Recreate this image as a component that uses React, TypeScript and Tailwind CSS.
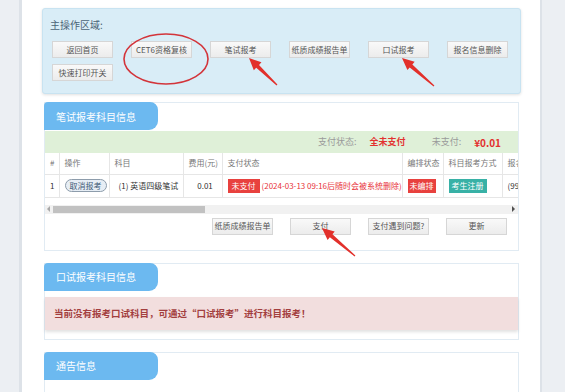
import type { ReactNode } from "react";

const topButtons = ["返回首页", "CET6资格复核", "笔试报考", "纸质成绩报告单", "口试报考", "报名信息删除", "快速打印开关"];
const payButtons = ["纸质成绩报告单", "支付", "支付遇到问题?", "更新"];

function Btn({ children }: { children: ReactNode }) {
  return (
    <button className="flex h-[17px] w-[61px] items-center justify-center border border-[#d6d6d6] bg-gradient-to-b from-[#f9f9f9] to-[#ececec] text-[8px] leading-none whitespace-nowrap text-[#555]">
      {children}
    </button>
  );
}

function Tab({ children }: { children: ReactNode }) {
  return (
    <div className="-mt-px -ml-px flex h-[28px] w-[114px] items-center rounded-tl-[4px] rounded-tr-[8px] rounded-br-[9px] bg-[#6cb9f0] pl-[12px] text-[10px] text-white">
      {children}
    </div>
  );
}

function Arrow({ from, to }: { from: [number, number]; to: [number, number] }) {
  const dx = to[0] - from[0];
  const dy = to[1] - from[1];
  const len = Math.hypot(dx, dy);
  const ux = dx / len;
  const uy = dy / len;
  const nx = -uy;
  const ny = ux;
  const head = 12;
  const bx = to[0] - ux * head;
  const by = to[1] - uy * head;
  const p = (x: number, y: number, w: number) => `${x + nx * w},${y + ny * w}`;
  const points = [
    p(from[0], from[1], 0.6),
    p(bx, by, 2),
    p(bx, by, 5.5),
    `${to[0]},${to[1]}`,
    p(bx, by, -5.5),
    p(bx, by, -2),
    p(from[0], from[1], -0.6),
  ].join(" ");
  return <polygon points={points} fill="#e2302b" />;
}

const th = "h-[21px] border-r border-b border-[#e6e6e6] pl-[5px] text-left font-normal text-[#777]";
const td = "h-[23px] border-r border-b border-[#e6e6e6] pl-[5px] text-[#333]";

export default function App() {
  return (
    <div className="relative flex h-[392px] w-[565px] overflow-hidden bg-[#eceff3] font-['Microsoft_YaHei','Noto_Sans_CJK_SC',sans-serif]">
      <div className="ml-[19px] w-[523px] shrink-0 border-r-[2px] border-l-[3px] border-[#dde2e8] bg-white pt-[8px] pr-[19px] pl-[20px]">
        {/* 主操作区域 */}
        <div className="rounded-[3px] border border-[#c8e3f1] bg-[#d9edf7] pt-[9px] pr-[9px] pb-[12px] pl-[7px] shadow-[0_1px_3px_rgba(0,0,0,0.12)]">
          <div className="text-[10px] leading-[14px] text-[#4b6476]">主操作区域:</div>
          <div className="mt-[9px] ml-[2px] flex flex-wrap gap-x-[18px] gap-y-[6px]">
            {topButtons.map((b) => (
              <Btn key={b}>{b}</Btn>
            ))}
          </div>
        </div>

        {/* 笔试报考科目信息 */}
        <div className="mx-[2px] mt-[8px] border border-[#e1ebf3]">
          <div className="h-[29px]">
            <Tab>笔试报考科目信息</Tab>
          </div>
          <div className="flex h-[22px] items-center justify-end bg-[#dff0d8] pr-[17px] text-[9px]">
            <span className="text-[#9a9a9a]">支付状态:</span>
            <span className="ml-[13px] font-bold text-[#e3312f]">全未支付</span>
            <span className="ml-[26px] text-[#9a9a9a]">未支付:</span>
            <span className="ml-[13px] text-[10px] font-bold text-[#e3312f]">¥0.01</span>
          </div>
          <div className="overflow-hidden">
            <table className="w-[560px] table-fixed border-collapse text-[8px] whitespace-nowrap">
              <colgroup>
                <col className="w-[14px]" />
                <col className="w-[50px]" />
                <col className="w-[74px]" />
                <col className="w-[39px]" />
                <col className="w-[180px]" />
                <col className="w-[41px]" />
                <col className="w-[59px]" />
                <col className="w-[103px]" />
              </colgroup>
              <thead>
                <tr>
                  <th className={th}>#</th>
                  <th className={th}>操作</th>
                  <th className={th}>科目</th>
                  <th className={th}>费用(元)</th>
                  <th className={th}>支付状态</th>
                  <th className={th}>编排状态</th>
                  <th className={th}>科目报考方式</th>
                  <th className={th}>报名时间</th>
                </tr>
              </thead>
              <tbody>
                <tr>
                  <td className={td}>1</td>
                  <td className={td}>
                    <span className="inline-flex h-[13px] items-center rounded-full border border-[#8d9cab] bg-[#e7eef5] px-[4px] text-[#3f5b75]">
                      取消报考
                    </span>
                  </td>
                  <td className={`${td} pl-[9px]`}>(1) 英语四级笔试</td>
                  <td className={`${td} pl-0 text-center`}>0.01</td>
                  <td className={td}>
                    <span className="inline-flex h-[14px] items-center bg-[#e8413e] px-[4px] text-white">未支付</span>
                    <span className="ml-[2px] text-[#e8333a]">(2024-03-13 09:16后随时会被系统删除)</span>
                  </td>
                  <td className={td}>
                    <span className="inline-flex h-[14px] items-center bg-[#e8413e] px-[2px] text-white">未编排</span>
                  </td>
                  <td className={td}>
                    <span className="inline-flex h-[14px] items-center bg-[#38b1a6] px-[3px] text-white">考生注册</span>
                  </td>
                  <td className={td}>(99</td>
                </tr>
              </tbody>
            </table>
          </div>
          {/* horizontal scrollbar */}
          <div className="mt-[7px] flex h-[9px] items-center bg-[#f1f1f1]">
            <span className="ml-[2px] h-0 w-0 border-y-[3px] border-r-[3px] border-y-transparent border-r-[#a8a8a8]" />
            <span className="ml-[3px] h-[7px] w-[152px] bg-[#c1c1c1]" />
            <span className="mr-[3px] ml-auto h-0 w-0 border-y-[3px] border-l-[3px] border-y-transparent border-l-[#505050]" />
          </div>
          <div className="mt-[4px] flex justify-end gap-[17px] pr-[11px] pb-[15px]">
            {payButtons.map((b) => (
              <Btn key={b}>{b}</Btn>
            ))}
          </div>
        </div>

        {/* 口试报考科目信息 */}
        <div className="mx-[2px] mt-[12px] border border-[#e1ebf3]">
          <div className="h-[34px]">
            <Tab>口试报考科目信息</Tab>
          </div>
          <div className="flex h-[33px] items-center bg-[#f2dede] pl-[9px] text-[9.5px] font-bold text-[#a33f3f] shadow-[0_2px_3px_rgba(0,0,0,0.12)]">
            当前没有报考口试科目，可通过“口试报考”进行科目报考！
          </div>
          <div className="h-[9px]" />
        </div>

        {/* 通告信息 */}
        <div className="mx-[2px] mt-[12px] h-[60px] border border-[#e1ebf3]">
          <Tab>通告信息</Tab>
        </div>
      </div>

      {/* annotations */}
      <svg className="pointer-events-none absolute inset-0" width="565" height="392" viewBox="0 0 565 392">
        <ellipse cx="166" cy="59" rx="42" ry="25" fill="none" stroke="#d3343a" strokeWidth="1.6" />
        <Arrow from={[277, 85]} to={[249, 58]} />
        <Arrow from={[434, 86]} to={[402, 58]} />
        <Arrow from={[355, 256]} to={[322, 228]} />
      </svg>
    </div>
  );
}
